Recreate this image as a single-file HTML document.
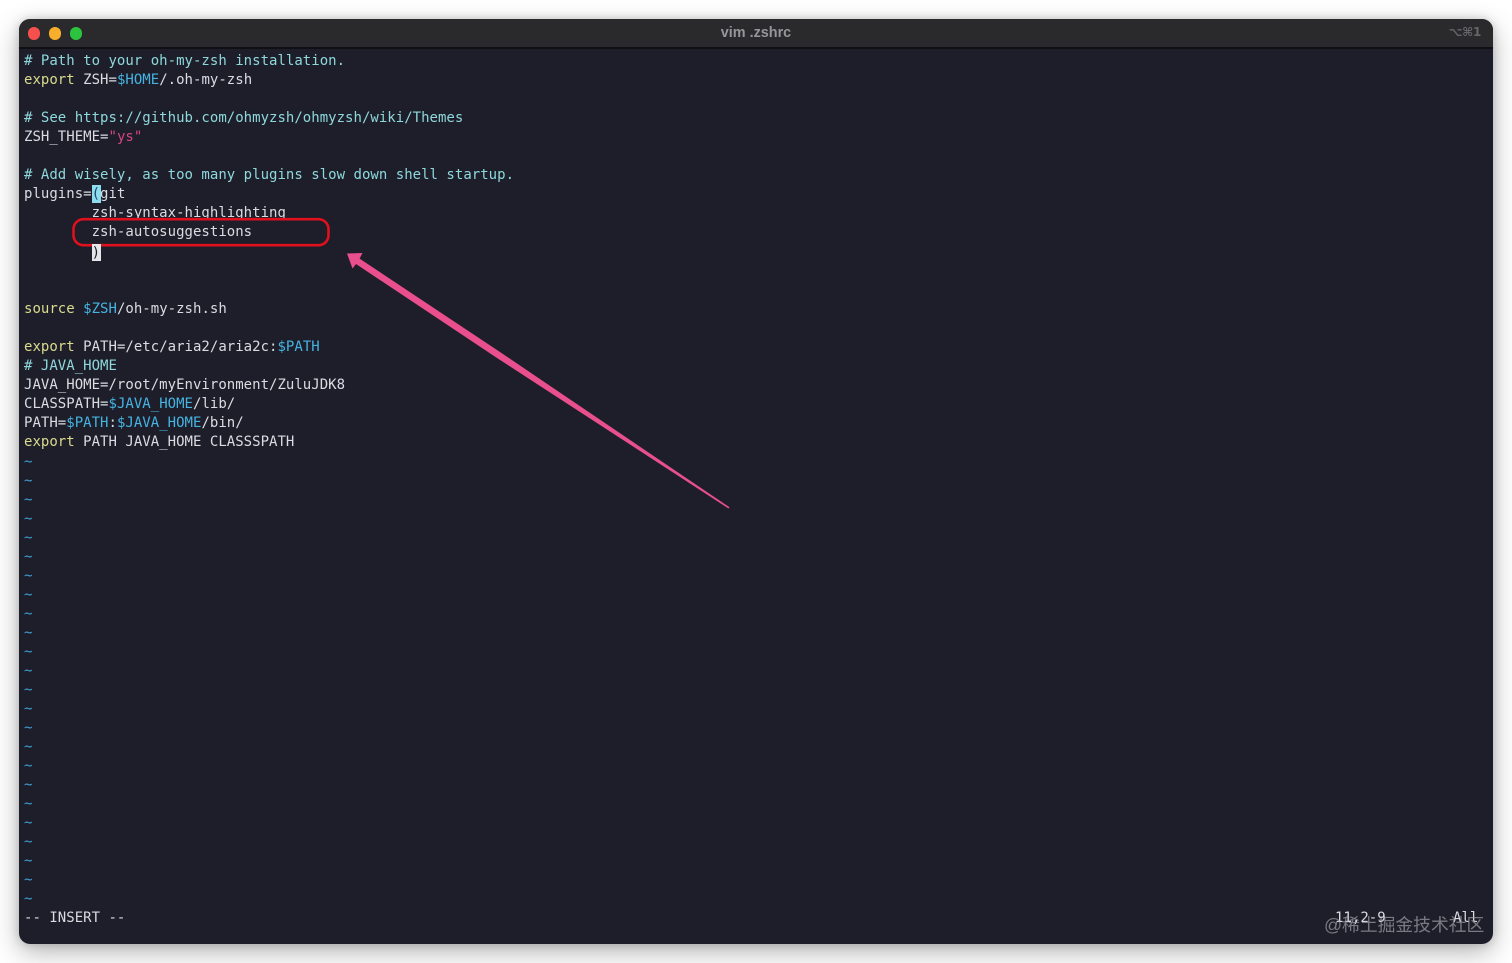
<!DOCTYPE html>
<html lang="zh">
<head>
<meta charset="utf-8">
<title>vim .zshrc</title>
<style>
html,body{margin:0;padding:0;width:1512px;height:963px;overflow:hidden;background:#fff}
#win{position:absolute;left:19px;top:19px;width:1474px;height:925px;border-radius:11px;background:#1d1e2a;box-shadow:0 8px 26px rgba(0,0,0,.3),0 0 9px rgba(0,0,0,.16);overflow:hidden}
#bar{position:absolute;left:0;top:0;width:100%;height:28px;background:#2a2a2c;border-bottom:2px solid #101014}
.dot{position:absolute;top:8px;width:12.6px;height:12.6px;border-radius:50%}
#title{position:absolute;left:0;top:6px;width:100%;text-align:center;font:bold 14.4px/17px "Liberation Sans",sans-serif;color:#96969a}
#sc{position:absolute;right:12px;top:5px;font:bold 12px/17px "DejaVu Sans",sans-serif;color:#66666a;letter-spacing:-.3px}
.l{position:absolute;left:24px;white-space:pre;padding-bottom:4px;font-family:"DejaVu Sans Mono","Liberation Mono",monospace;font-size:14px;line-height:19px;letter-spacing:.02px;color:#d9dde2;filter:blur(.3px)}
.c{color:#8ed8dc}.y{color:#dadb8d}.b{color:#45b4e2}.p{color:#d8457f}.t{color:#3f9fd4}
svg{position:absolute;left:0;top:0}
#wm{position:absolute;left:1324px;top:913px;font:17.8px/24px "Liberation Sans","Noto Sans CJK SC",sans-serif;color:rgba(170,170,175,.66);white-space:pre}
</style>
</head>
<body>
<div id="win">
  <div id="bar">
    <div class="dot" style="left:8.7px;background:#f5504d"></div>
    <div class="dot" style="left:29.7px;background:#f9ae2b"></div>
    <div class="dot" style="left:50.7px;background:#2cc33f"></div>
    <div id="title">vim .zshrc</div>
    <div id="sc">⌥⌘1</div>
  </div>
</div>

<div style="position:absolute;left:92px;top:185px;width:8.5px;height:18px;background:#8edcf0"></div>
<div class="l" style="top:52px"><span class="c"># Path to your oh-my-zsh installation.</span></div>
<div class="l" style="top:71px"><span class="y">export</span> ZSH=<span class="b">$HOME</span>/.oh-my-zsh</div>
<div class="l" style="top:109px"><span class="c"># See https://github.com/ohmyzsh/ohmyzsh/wiki/Themes</span></div>
<div class="l" style="top:128px">ZSH_THEME=<span class="p">"ys"</span></div>
<div class="l" style="top:166px"><span class="c"># Add wisely, as too many plugins slow down shell startup.</span></div>
<div class="l" style="top:185px">plugins=<span style="color:#1d4a60">(</span>git</div>
<div class="l" style="top:204px">        zsh-syntax-highlighting</div>

<svg width="1512" height="963" viewBox="0 0 1512 963">
  <rect x="73.5" y="219.2" width="255" height="26" rx="10" fill="#1d1e2a" stroke="#e0101c" stroke-width="2.6"/>
  <path d="M347 253.5 L362.5 253 L359.6 258.6 L500 352 L729.5 507.3 L728.5 508.5 L497 358 L356 264 L352.5 268.5 Z" fill="#e94f8d"/>
</svg>

<div class="l" style="top:223px">        zsh-autosuggestions</div>
<div style="position:absolute;left:92px;top:244px;width:8.5px;height:17px;background:#e6e6ea"></div>
<div class="l" style="top:244px;color:#1d1e2a">        )</div>
<div class="l" style="top:300px"><span class="y">source</span> <span class="b">$ZSH</span>/oh-my-zsh.sh</div>
<div class="l" style="top:338px"><span class="y">export</span> PATH=/etc/aria2/aria2c:<span class="b">$PATH</span></div>
<div class="l" style="top:357px"><span class="c"># JAVA_HOME</span></div>
<div class="l" style="top:376px">JAVA_HOME=/root/myEnvironment/ZuluJDK8</div>
<div class="l" style="top:395px">CLASSPATH=<span class="b">$JAVA_HOME</span>/lib/</div>
<div class="l" style="top:414px">PATH=<span class="b">$PATH</span>:<span class="b">$JAVA_HOME</span>/bin/</div>
<div class="l" style="top:433px"><span class="y">export</span> PATH JAVA_HOME CLASSSPATH</div>

<div class="l t" style="top:453px">~</div>
<div class="l t" style="top:472px">~</div>
<div class="l t" style="top:491px">~</div>
<div class="l t" style="top:510px">~</div>
<div class="l t" style="top:529px">~</div>
<div class="l t" style="top:548px">~</div>
<div class="l t" style="top:567px">~</div>
<div class="l t" style="top:586px">~</div>
<div class="l t" style="top:605px">~</div>
<div class="l t" style="top:624px">~</div>
<div class="l t" style="top:643px">~</div>
<div class="l t" style="top:662px">~</div>
<div class="l t" style="top:681px">~</div>
<div class="l t" style="top:700px">~</div>
<div class="l t" style="top:719px">~</div>
<div class="l t" style="top:738px">~</div>
<div class="l t" style="top:757px">~</div>
<div class="l t" style="top:776px">~</div>
<div class="l t" style="top:795px">~</div>
<div class="l t" style="top:814px">~</div>
<div class="l t" style="top:833px">~</div>
<div class="l t" style="top:852px">~</div>
<div class="l t" style="top:871px">~</div>
<div class="l t" style="top:890px">~</div>

<div class="l" style="top:909px">-- INSERT --</div>
<div class="l" style="top:909px;left:1335px">11,2-9</div>
<div class="l" style="top:909px;left:1453px">All</div>
<div id="wm">@稀土掘金技术社区</div>
</body>
</html>
